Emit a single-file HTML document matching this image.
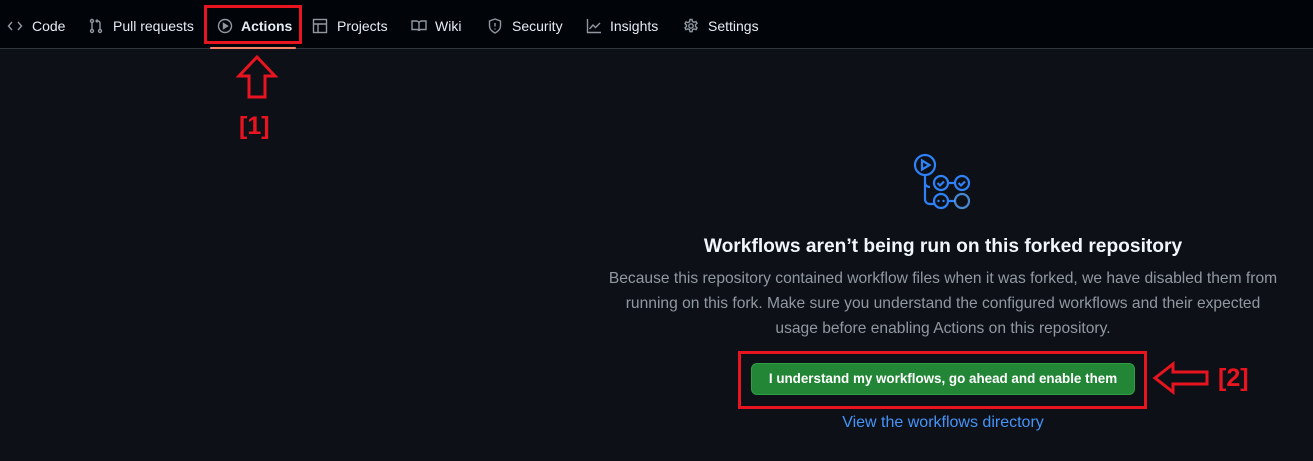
<!DOCTYPE html>
<html><head><meta charset="utf-8"><style>
*{margin:0;padding:0;box-sizing:border-box}
body{width:1313px;height:461px;background:#0d1117;font-family:"Liberation Sans",sans-serif;color:#e6edf3;position:relative;overflow:hidden}
.top{position:absolute;left:0;top:0;width:1313px;height:49px;background:#010409;border-bottom:1px solid #30363d}
.it{position:absolute;top:17px;font-size:14px;color:#e6edf3;line-height:18px;white-space:nowrap}
.ic{position:absolute;top:18px;width:16px;height:16px}
svg.ic path,svg.ic circle,svg.ic rect{fill:none;stroke:#9198a1;stroke-width:1.4}
.abs{position:absolute}
</style></head><body>
<div class="top">
<svg class="ic" style="left:7px" viewBox="0 0 16 16"><path d="M5 4L1.5 8 5 12M11 4l3.5 4-3.5 4"/></svg>
<div class="it" style="left:32px">Code</div>
<svg class="ic" style="left:88px" viewBox="0 0 16 16"><circle cx="4" cy="3" r="1.5"/><circle cx="4" cy="13" r="1.5"/><circle cx="12" cy="13" r="1.5"/><path d="M4 4.5v7M12 11.5V5c0-1-1-2-2-2H8M9.5 1.5L8 3l1.5 1.5"/></svg>
<div class="it" style="left:113px">Pull requests</div>
<svg class="ic" style="left:217px" viewBox="0 0 16 16"><circle cx="8" cy="8" r="6.5"/><path d="M6.5 5.5v5l4-2.5z" style="fill:#9198a1"/></svg>
<div class="it" style="left:241px;font-weight:bold">Actions</div>
<svg class="ic" style="left:312px" viewBox="0 0 16 16"><rect x="1.5" y="1.5" width="13" height="13"/><path d="M1.5 6h13M6 6v8.5"/></svg>
<div class="it" style="left:337px">Projects</div>
<svg class="ic" style="left:411px" viewBox="0 0 16 16"><path d="M1 3h4.5C7 3 8 4 8 5.5V13C8 12 7 11.5 6 11.5H1zM15 3h-4.5C9 3 8 4 8 5.5V13c0-1 1-1.5 2-1.5h5z"/></svg>
<div class="it" style="left:435px">Wiki</div>
<svg class="ic" style="left:487px" viewBox="0 0 16 16"><path d="M8 1L2.5 3v5c0 3 2.5 5.5 5.5 7 3-1.5 5.5-4 5.5-7V3z M8 5v3.5M8 10.5v1"/></svg>
<div class="it" style="left:512px">Security</div>
<svg class="ic" style="left:586px" viewBox="0 0 16 16"><path d="M1.5 1v13.5H15M3.5 11l3.5-4 2.5 2.5L14 5"/></svg>
<div class="it" style="left:610px">Insights</div>
<svg class="ic" style="left:683px" viewBox="0 0 16 16"><circle cx="8" cy="8" r="2.2"/><path d="M7 1.5h2l.5 2 1.5.8 2-.7 1 1.7-1.5 1.5v1.6l1.5 1.5-1 1.7-2-.7-1.5.8-.5 2H7l-.5-2-1.5-.8-2 .7-1-1.7 1.5-1.5V7.1L2 5.6l1-1.7 2 .7 1.5-.8z"/></svg>
<div class="it" style="left:708px">Settings</div>
</div>
<div class="abs" style="left:210px;top:47px;width:86px;height:2px;background:#f78166;border-radius:2px"></div>
<div class="abs" style="left:204px;top:5px;width:98px;height:39px;border:3px solid #e8141f"></div>
<svg class="abs" style="left:236px;top:54px" width="42" height="46" viewBox="0 0 42 46"><path d="M21 3L3 22h10v21h16V22h10z" fill="none" stroke="#e8141f" stroke-width="3"/></svg>
<div class="abs" style="left:239px;top:112px;font-size:25px;font-weight:bold;color:#e8141f">[1]</div>

<svg class="abs" style="left:912px;top:152px" width="62" height="62" viewBox="0 0 62 62">
<g fill="none" stroke="#2f81f7" stroke-width="2.2">
<circle cx="13" cy="13" r="10"/><path d="M10 8.5v9l7.5-4.5z"/>
<path d="M13 23v24c0 3 2 5 5 5h4M13 31c0 2 2 4 5 4"/>
<circle cx="29" cy="31" r="7"/><path d="M25.5 31l2.5 2.5 4-4"/>
<path d="M36 31h7"/><circle cx="50" cy="31" r="7"/><path d="M46.5 31l2.5 2.5 4-4"/>
<circle cx="29" cy="49" r="7"/><path d="M36 49h7"/>
</g>
<circle cx="26.5" cy="49" r="1.2" fill="#2f81f7"/><circle cx="31.5" cy="49" r="1.2" fill="#2f81f7"/>
<circle cx="50" cy="49" r="7" fill="none" stroke="#58a6ff" stroke-width="2.2" opacity="0.8"/>
</svg>
<div class="abs" style="left:543px;width:800px;top:236px;text-align:center;font-size:19.2px;font-weight:bold;color:#f0f6fc">Workflows aren’t being run on this forked repository</div>
<div class="abs" style="left:603px;width:680px;top:266px;text-align:center;font-size:15.6px;line-height:25px;color:#9198a1">Because this repository contained workflow files when it was forked, we have disabled them from running on this fork. Make sure you understand the configured workflows and their expected usage before enabling Actions on this repository.</div>
<div class="abs" style="left:751px;top:363px;width:384px;height:32px;background:#238636;border:1px solid #2ea043;border-radius:6px;color:#fff;font-size:13.4px;font-weight:bold;text-align:center;line-height:30px">I understand my workflows, go ahead and enable them</div>
<div class="abs" style="left:738px;top:351px;width:409px;height:58px;border:3px solid #e8141f"></div>
<svg class="abs" style="left:1152px;top:361px" width="58" height="34" viewBox="0 0 58 34"><path d="M3 17L21 3v8h34v12H21v8z" fill="none" stroke="#e8141f" stroke-width="3"/></svg>
<div class="abs" style="left:1218px;top:364px;font-size:25px;font-weight:bold;color:#e8141f">[2]</div>
<div class="abs" style="left:543px;width:800px;top:414px;text-align:center;font-size:16px;color:#4493f8">View the workflows directory</div>
</body></html>
